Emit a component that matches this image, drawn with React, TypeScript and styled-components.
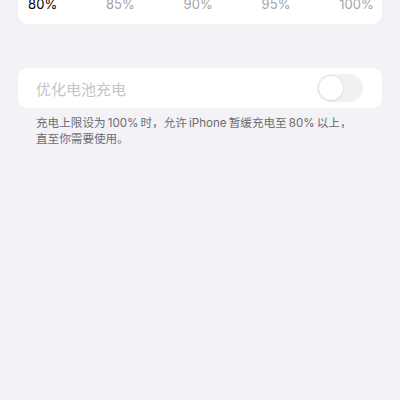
import React from "react";
import styled, { createGlobalStyle } from "styled-components";

const Global = createGlobalStyle`
  html, body {
    margin: 0;
    padding: 0;
    background: #f2f2f7;
    overflow: hidden;
  }
  body {
    font-family: Inter, "Noto Sans CJK SC", sans-serif;
    -webkit-font-smoothing: antialiased;
  }
`;

const Page = styled.div`
  width: 400px;
  height: 400px;
  padding: 0 18px;
  box-sizing: border-box;
  background: #f2f2f7;
`;

const Card = styled.div`
  background: #ffffff;
  border-radius: 10px;
`;

const SliderCard = styled(Card)`
  margin-top: -30px;
  padding: 26px 8px 11px 10px;
`;

const Labels = styled.div`
  display: flex;
  justify-content: space-between;
`;

const Label = styled.span<{ $active?: boolean }>`
  font-size: 13px;
  line-height: 17px;
  letter-spacing: 0.1px;
  color: ${(p) => (p.$active ? "#000000" : "#a4a4a8")};
`;

const ToggleCard = styled(Card)`
  margin-top: 44px;
  height: 40px;
  display: flex;
  align-items: center;
  justify-content: space-between;
  padding: 0 19px 0 18px;
`;

const RowTitle = styled.span`
  font-size: 15px;
  color: #c4c4c7;
  font-family: "Noto Sans CJK SC", sans-serif;
`;

const Track = styled.div`
  width: 46px;
  height: 28px;
  border-radius: 14px;
  background: #f1f1f3;
  position: relative;
`;

const Knob = styled.div`
  position: absolute;
  left: 2px;
  top: 2px;
  width: 24px;
  height: 24px;
  border-radius: 50%;
  background: #ffffff;
  box-shadow: 0 0 0 0.5px rgba(0, 0, 0, 0.06), 0 1px 3px rgba(0, 0, 0, 0.08);
`;

const Footer = styled.p`
  margin: 7px 0 0;
  padding: 0 18px;
  font-size: 11.6px;
  line-height: 16px;
  color: #6d6d72;
  white-space: nowrap;
`;

const levels = ["80%", "85%", "90%", "95%", "100%"];

export default function App() {
  return (
    <Page>
      <Global />
      <SliderCard>
        <Labels>
          {levels.map((l, i) => (
            <Label key={l} $active={i === 0}>
              {l}
            </Label>
          ))}
        </Labels>
      </SliderCard>
      <ToggleCard>
        <RowTitle>优化电池充电</RowTitle>
        <Track>
          <Knob />
        </Track>
      </ToggleCard>
      <Footer>
        {"充电上限设为\u2009100%\u2009时，允许\u2009iPhone\u2009暂缓充电至\u200980%\u2009以上，"}
        <br />
        直至你需要使用。
      </Footer>
    </Page>
  );
}
